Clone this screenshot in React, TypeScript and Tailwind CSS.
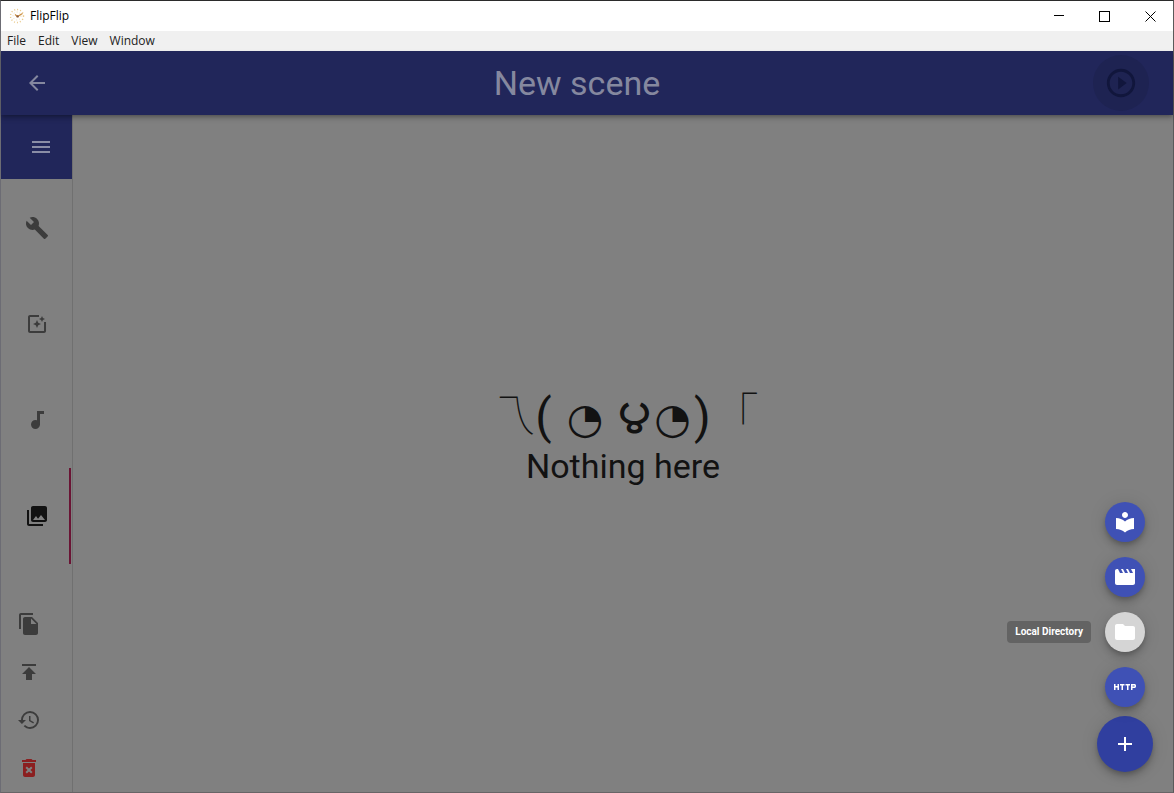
import type { ReactNode } from "react";
import type { IconType } from "react-icons";
import {
  MdAdd,
  MdArrowBack,
  MdAudiotrack,
  MdBuild,
  MdCollections,
  MdDeleteForever,
  MdFileCopy,
  MdFolder,
  MdHttp,
  MdLocalLibrary,
  MdMenu,
  MdMovie,
  MdPhotoFilter,
  MdPlayCircleOutline,
  MdPublish,
  MdRestore,
} from "react-icons/md";

function AppLogo() {
  return (
    <svg viewBox="0 0 16 16" className="size-4" aria-hidden="true">
      <circle cx="8" cy="8" r="6.5" fill="none" stroke="#e9c98a" strokeWidth="1.4" strokeDasharray="1 2" />
      <circle cx="8" cy="8" r="4" fill="none" stroke="#f0dcb4" strokeWidth="1" strokeDasharray="1 2" />
      <path d="M6 6.5 8.5 8.5 13.5 5.5" fill="none" stroke="#c98a3a" strokeWidth="1.1" />
      <circle cx="8.6" cy="8.4" r="1.2" fill="#8a5a3a" />
    </svg>
  );
}

function CaptionButton({ label, children }: { label: string; children: ReactNode }) {
  return (
    <button type="button" aria-label={label} className="flex h-full w-[46px] items-center justify-center">
      <svg viewBox="0 0 11 11" className="size-[11px]" fill="none" stroke="#000" shapeRendering="crispEdges">
        {children}
      </svg>
    </button>
  );
}

function TitleBar() {
  return (
    <div className="flex h-[30px] items-center bg-white pl-2 text-xs text-black">
      <AppLogo />
      <span className="ml-[5px] grow">FlipFlip</span>
      <CaptionButton label="Minimize">
        <path d="M1 4.5h10" />
      </CaptionButton>
      <CaptionButton label="Maximize">
        <path d="M.5 -.5h10v10h-10z" className="translate-y-px" />
      </CaptionButton>
      <CaptionButton label="Close">
        <path d="M.5 .5l10 10M10.5 .5l-10 10" shapeRendering="auto" />
      </CaptionButton>
    </div>
  );
}

function MenuBar() {
  return (
    <nav className="flex h-5 items-center gap-3 bg-[#f0f0f0] pl-[6px] text-xs text-[#222]">
      {["File", "Edit", "View", "Window"].map((item) => (
        <button key={item} type="button">
          {item}
        </button>
      ))}
    </nav>
  );
}

const tabs: { label: string; Icon: IconType }[] = [
  { label: "Options", Icon: MdBuild },
  { label: "Effects", Icon: MdPhotoFilter },
  { label: "Audio", Icon: MdAudiotrack },
  { label: "Sources", Icon: MdCollections },
];

const actions: { label: string; Icon: IconType; color: string }[] = [
  { label: "Clone scene", Icon: MdFileCopy, color: "text-[#3c3c3c]" },
  { label: "Export scene", Icon: MdPublish, color: "text-[#3c3c3c]" },
  { label: "Restore defaults", Icon: MdRestore, color: "text-[#3c3c3c]" },
  { label: "Delete scene", Icon: MdDeleteForever, color: "text-[#8b1f20]" },
];

function Sidebar() {
  return (
    <aside className="flex w-[72px] shrink-0 flex-col border-r border-[#707070]">
      <button
        type="button"
        aria-label="Toggle drawer"
        className="flex h-16 items-center justify-center bg-[#21265a] pl-2 text-[#8a8da6]"
      >
        <MdMenu className="size-6" />
      </button>
      <div role="tablist" aria-orientation="vertical" className="flex flex-col pt-px pr-px">
        {tabs.map(({ label, Icon }) => {
          const selected = label === "Sources";
          return (
            <button
              key={label}
              type="button"
              role="tab"
              aria-label={label}
              aria-selected={selected}
              className={
                selected
                  ? "flex h-24 items-center border-r-2 border-[#6a1434] pl-6 text-[#121212]"
                  : "flex h-24 items-center pl-6 text-[#3c3c3c]"
              }
            >
              <Icon className="size-6" />
            </button>
          );
        })}
      </div>
      <div className="mt-auto flex flex-col">
        {actions.map(({ label, Icon, color }) => (
          <button key={label} type="button" aria-label={label} className={`flex h-12 items-center pl-4 ${color}`}>
            <Icon className="size-6" />
          </button>
        ))}
      </div>
    </aside>
  );
}

const sources: { label: string; Icon: IconType; style: string }[] = [
  { label: "From Library", Icon: MdLocalLibrary, style: "bg-[#3f51b5]" },
  { label: "Local Video/Playlist", Icon: MdMovie, style: "bg-[#3f51b5]" },
  { label: "Local Directory", Icon: MdFolder, style: "bg-[#d5d5d5]" },
  { label: "URL", Icon: MdHttp, style: "bg-[#3f51b5]" },
];

function SourceDial() {
  return (
    <div className="fixed right-[21px] bottom-[21px] flex flex-col items-center gap-[9px] font-[Roboto,sans-serif] text-white">
      <div className="flex flex-col gap-[15px]">
        {sources.map(({ label, Icon, style }) => (
          <div key={label} className="relative">
            {label === "Local Directory" && (
              <div
                role="tooltip"
                className="absolute top-1/2 right-[54px] -translate-y-1/2 rounded-sm bg-[#636363] px-2 py-1 text-[10px] leading-[14px] font-bold whitespace-nowrap"
              >
                {label}
              </div>
            )}
            <button
              type="button"
              aria-label={label}
              className={`flex size-10 items-center justify-center rounded-full shadow-[0_3px_5px_-1px_rgba(0,0,0,0.2),0_6px_10px_rgba(0,0,0,0.14),0_1px_18px_rgba(0,0,0,0.12)] ${style}`}
            >
              <Icon className="size-6" />
            </button>
          </div>
        ))}
      </div>
      <button
        type="button"
        aria-label="Add source"
        className="flex size-14 items-center justify-center rounded-full bg-[#303f9f] shadow-[0_3px_5px_-1px_rgba(0,0,0,0.2),0_6px_10px_rgba(0,0,0,0.14),0_1px_18px_rgba(0,0,0,0.12)]"
      >
        <MdAdd className="size-6" />
      </button>
    </div>
  );
}

export default function App() {
  return (
    <div className="flex min-h-screen flex-col border border-[#2b2b2b] border-r-[#5a5a5a] border-b-[#686466] border-l-[#6c6c74] bg-[#808080] font-['Open_Sans',sans-serif]">
      <TitleBar />
      <MenuBar />
      <header className="relative z-10 flex h-16 items-center bg-[#21265a] px-6 font-[Roboto,sans-serif] text-[#85889f] shadow-[0_2px_4px_-1px_rgba(0,0,0,0.3),0_4px_5px_rgba(0,0,0,0.14)]">
        <div className="flex flex-1">
          <button type="button" aria-label="Back">
            <MdArrowBack className="size-6" />
          </button>
        </div>
        <h1 className="mr-5 text-[34px] leading-[42px]">New scene</h1>
        <div className="flex flex-1 justify-end">
          <button
            type="button"
            aria-label="Play"
            className="flex size-14 items-center justify-center rounded-full bg-[#1e2352] text-[#11163c]"
          >
            <MdPlayCircleOutline className="size-[34px]" />
          </button>
        </div>
      </header>
      <div className="flex grow font-[Roboto,sans-serif]">
        <Sidebar />
        <main className="flex grow flex-col items-center justify-center pb-8 text-[34px] leading-[42px] text-[#121212]">
          <p className="font-[Roboto,'DejaVu_Sans','Noto_Sans_CJK_JP',sans-serif] text-[48px] leading-[56px] whitespace-pre">
            <span className="font-['Noto_Sans_CJK_JP',sans-serif] leading-none font-thin">乁</span>
            {"( "}
            <span className="px-[3px] text-[42px] leading-none">◔</span>
            {" ౪"}
            <span className="px-[3px] text-[42px] leading-none">◔</span>
            {")"}
            <span className="font-['Noto_Sans_CJK_JP',sans-serif] leading-none font-thin">「</span>
          </p>
          <p>Nothing here</p>
        </main>
      </div>
      <SourceDial />
    </div>
  );
}
